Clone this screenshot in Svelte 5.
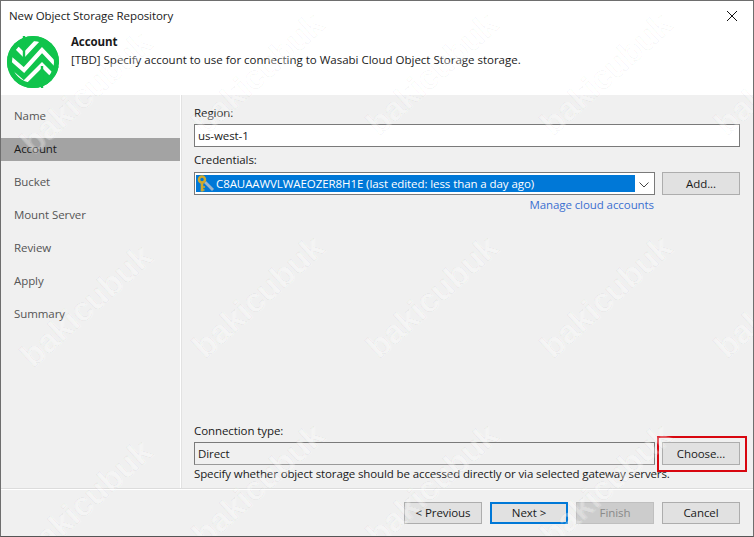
<script>
  const steps = ['Name', 'Account', 'Bucket', 'Mount Server', 'Review', 'Apply', 'Summary'];
  const marks = [];
  for (const [x, y] of [[85,92],[85,305],[85,500],[257,73],[257,296],[257,484],[431,73],[431,296],[431,484],[605,73],[605,296],[605,484],[779,73],[779,296]]) marks.push({ x, y });
</script>

<div class="win">
  <header class="head">
    <div class="title"><span>New Object Storage Repository</span>
      <svg class="close" width="12" height="12" viewBox="0 0 12 12"><path d="M1 1l10 10M11 1L1 11" stroke="#111" stroke-width="1" fill="none"/></svg>
    </div>
    <div class="banner">
      <svg class="logo" width="52" height="52" viewBox="0 0 52 52">
        <circle cx="26" cy="26" r="26" fill="#10c44c"/>
        <g fill="none" stroke="#fff" stroke-width="4.200">
          <path d="M8 10l9 9L31 4"/>
          <path d="M2 21l15 13L35 14 51 31"/>
          <path d="M2 34l15 13L35 29 47 41"/>
        </g>
        <path d="M17 0V28M35 30V52" stroke="#10c44c" stroke-width="2.400"/>
        <circle cx="26" cy="26" r="23.500" fill="none" stroke="#10c44c" stroke-width="5"/>
      </svg>
      <div class="intro">
        <b>Account</b>
        <p>[TBD] Specify account to use for connecting to Wasabi Cloud Object Storage storage.</p>
      </div>
    </div>
  </header>

  <div class="middle">
    <nav class="nav">
      {#each steps as s}
        <div class="step" class:on={s === 'Account'}>{s}</div>
      {/each}
    </nav>
    <main class="form">
      <div class="lab">Region:</div>
      <div class="input">us-west-1</div>
      <div class="lab second">Credentials:</div>
      <div class="row">
        <div class="combo">
          <div class="sel">
            <svg width="18" height="17" viewBox="0 0 18 17">
              <path d="M8 7l8 8" stroke="#9db4c8" stroke-width="2.800" fill="none"/>
              <circle cx="5" cy="4.500" r="3" fill="none" stroke="#d0a92c" stroke-width="2.500"/>
              <path d="M5 7.500V16.500" stroke="#d0a92c" stroke-width="2.600"/>
              <path d="M5 12h3M5 15h2.500" stroke="#d0a92c" stroke-width="1.300"/>
            </svg>
            <span>C8AUAAWVLWAEOZER8H1E (last edited: less than a day ago)</span>
          </div>
          <svg class="chev" width="10" height="6" viewBox="0 0 10 6"><path d="M.5.5L5 5 9.500.5" fill="none" stroke="#444"/></svg>
        </div>
        <div class="btn">Add...</div>
      </div>
      <div class="linkrow"><span class="link">Manage cloud accounts</span></div>
      <div class="spacer"></div>
      <div class="lab">Connection type:</div>
      <div class="row">
        <div class="field">Direct</div>
        <div class="btn">Choose...</div>
      </div>
      <div class="help">Specify whether object storage should be accessed directly or via selected gateway servers.</div>
    </main>
  </div>

  <footer class="foot">
    <div class="btn">&lt; Previous</div>
    <div class="btn default">Next &gt;</div>
    <div class="btn off">Finish</div>
    <div class="btn">Cancel</div>
  </footer>

  <div class="redbox"></div>
  {#each marks as m}
    <span class="mark" style="left:{m.x}px;top:{m.y}px">bakicubuk</span>
  {/each}
</div>

<style>
  :global(body) { margin: 0; }
  .win {
    position: relative; width: 754px; height: 537px; box-sizing: border-box; overflow: hidden;
    display: flex; flex-direction: column;
    background: #f0f0f0; border: 1px solid #6e6e6e; border-bottom-color: #555;
    font: 11.500px/16px "Open Sans", "Noto Sans", sans-serif; letter-spacing: -0.08px; color: #1a1a1a;
  }
  .head { background: #fff; height: 94px; flex: none; }
  .title { display: flex; justify-content: space-between; align-items: center; padding: 7px 15px 0 8px; height: 16px; color: #222; }
  .banner { display: flex; padding: 12px 0 0 6px; gap: 12px; }
  .intro b { display: block; font-weight: 700; margin-top: -2px; }
  .intro p { margin: 2px 0 0; letter-spacing: -0.01px; }
  .middle { flex: 1; display: flex; min-height: 0; }
  .nav { width: 179px; flex: none; padding-top: 10px; border-right: 1px solid #fff; box-shadow: 1px 0 0 #e2e2e2; }
  .step { height: 23px; line-height: 21px; margin-bottom: 10px; padding-left: 13px; color: #555; }
  .step.on { background: #a3a3a3; color: #1a1a1a; }
  .form { flex: 1; display: flex; flex-direction: column; padding: 10px 13px 7px 13px; }
  .lab { height: 19px; line-height: 16px; }
  .second { margin-top: 5px; height: 20px; }
  .input { box-sizing: border-box; height: 23px; line-height: 21px; border: 1px solid #7a7a7a; background: #fff; padding-left: 3px; }
  .row { display: flex; justify-content: space-between; }
  .combo { position: relative; box-sizing: border-box; width: 461px; height: 23px; border: 1px solid #7a7a7a; background: #fff; padding: 2px 0 0 1px; flex: none; }
  .sel { width: 439px; height: 17px; background: #0078d7; color: #fff; display: flex; align-items: center; gap: 1px; }
  .sel svg { flex: none; margin-left: 1px; }
  .chev { position: absolute; right: 5px; top: 9px; }
  .btn {
    box-sizing: border-box; width: 78px; height: 22px; line-height: 20px; text-align: center;
    background: #e1e1e1; border: 1px solid #adadad; flex: none;
  }
  .row .btn { height: 23px; line-height: 21px; }
  .linkrow { display: flex; padding: 2px 86px 0 0; justify-content: flex-end; }
  .link { color: #3b6fd1; }
  .spacer { flex: 1; }
  .field { box-sizing: border-box; width: 461px; height: 23px; line-height: 21px; border: 1px solid #7a7a7a; border-bottom-color: #9a9a9a; padding-left: 3px; background: #f0f0f0; flex: none; }
  .help { margin-top: 1px; letter-spacing: -0.12px; }
  .foot { height: 47px; flex: none; border-top: 1px solid #fff; box-shadow: 0 -1px 0 #dcdcdc; display: flex; justify-content: flex-end; gap: 8px; padding: 12px 13px 0 0; box-sizing: border-box; }
  .default { border: 2px solid #0078d7; line-height: 18px; }
  .off { background: #ccc; border-color: #bfbfbf; color: #8a8a8a; }
  .redbox { position: absolute; left: 656px; top: 435px; width: 86px; height: 32px; border: 2px solid #d8060f; pointer-events: none; }
  .mark {
    position: absolute; transform: translate(-50%, -50%) rotate(-42deg); pointer-events: none;
    font: 700 33px/40px "Liberation Sans", sans-serif; letter-spacing: 0; color: rgba(255,255,255,.12);
    -webkit-text-stroke: 1px rgba(0,0,0,.035); text-shadow: 1px 1px 1px rgba(255,255,255,.25);
  }
</style>
